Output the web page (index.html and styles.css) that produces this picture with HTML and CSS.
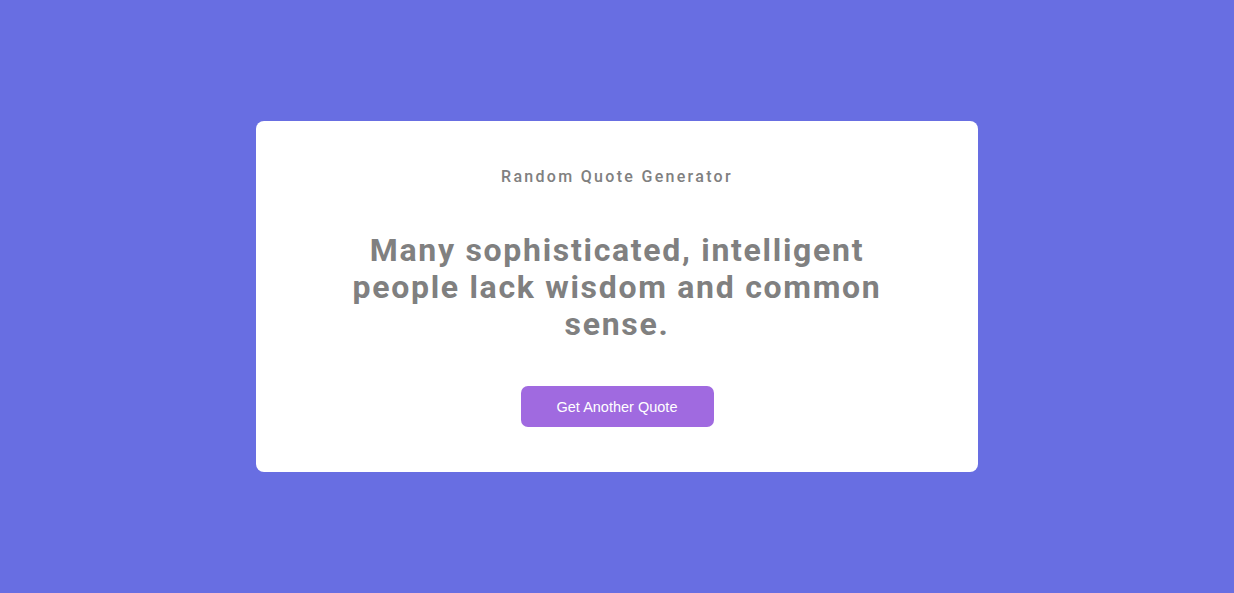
FILE: index.html
```html
<!DOCTYPE html>
<html lang="en">
<head>
<meta charset="utf-8">
<title>Random Quote Generator</title>
<link rel="stylesheet" href="styles.css">
</head>
<body>
<main class="card">
  <h1 class="title">Random Quote Generator</h1>
  <p class="quote">Many sophisticated, intelligent people lack wisdom and common sense.</p>
  <button class="btn" type="button">Get Another Quote</button>
</main>
</body>
</html>
```

FILE: styles.css
```css
html, body {
  height: 100%;
}
body {
  margin: 0;
  background: #686ee2;
  display: flex;
  align-items: center;
  justify-content: center;
  font-family: Roboto, "Liberation Sans", sans-serif;
}
.card {
  width: 722px;
  box-sizing: border-box;
  background: #ffffff;
  border-radius: 8px;
  padding: 46px 40px 45px;
  display: flex;
  flex-direction: column;
  align-items: center;
  text-align: center;
}
.title {
  margin: 0;
  font-size: 16px;
  font-weight: 500;
  letter-spacing: 2.3px;
  color: #808080;
  line-height: 19px;
}
.quote {
  margin: 46px 0 43px;
  max-width: 560px;
  font-size: 32px;
  font-weight: 700;
  letter-spacing: 1.7px;
  line-height: 37px;
  color: #808080;
}
.btn {
  width: 193px;
  height: 41px;
  border: none;
  border-radius: 7px;
  background: #a06ae0;
  color: #ffffff;
  font-family: "Liberation Sans", Arial, sans-serif;
  font-size: 14.5px;
  cursor: pointer;
}
```
